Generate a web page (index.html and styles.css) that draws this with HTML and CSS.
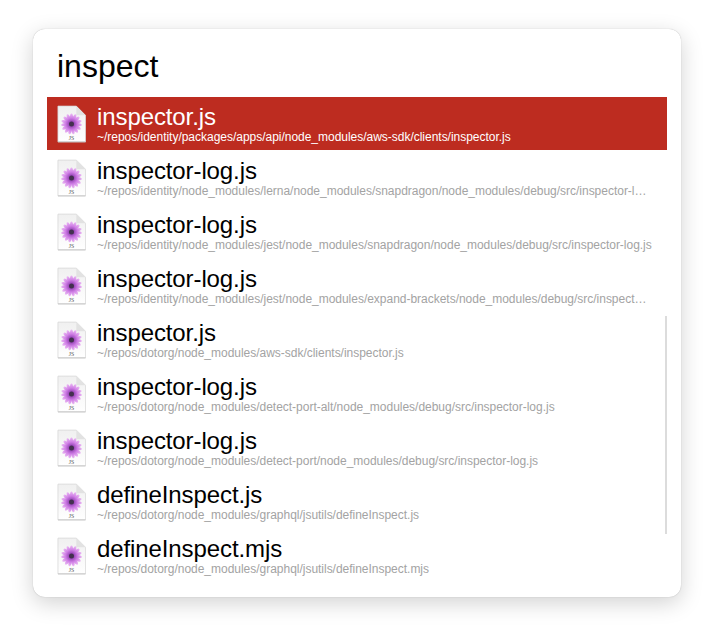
FILE: index.html
```html
<!DOCTYPE html>
<html lang="en">
<head>
    <meta charset="UTF-8">
    <meta name="viewport" content="width=device-width, initial-scale=1.0">
    <title>Open Quickly</title>
    <link rel="stylesheet" href="styles.css">
</head>
<body>
    <svg class="defs" width="0" height="0">
        <defs>
            <radialGradient id="petal-fill" gradientUnits="userSpaceOnUse" cx="15" cy="19" r="10.5">
                <stop offset="0.25" stop-color="#9a48ba"/>
                <stop offset="0.6" stop-color="#d07fe6"/>
                <stop offset="1" stop-color="#e8b4f2"/>
            </radialGradient>
            <linearGradient id="page-fill" x1="0" y1="0" x2="0" y2="1">
                <stop offset="0" stop-color="#f0f0f0"/>
                <stop offset="1" stop-color="#ffffff"/>
            </linearGradient>
            <ellipse id="petal" cx="15" cy="13.3" rx="1.7" ry="5.2" fill="url(#petal-fill)"/>
            <symbol id="js-file" viewBox="0 0 30 38">
                <path d="M1 .5H20L29.5 10V37.5H1Z" fill="url(#page-fill)" stroke="#d8d8d8" stroke-width=".8"/>
                <path d="M1 37.5H29.5" stroke="#bdbdbd" stroke-width=".8"/>
                <path d="M20 .5V10H29.5Z" fill="#e2e2e2"/>
                <use href="#petal"/>
                <use href="#petal" transform="rotate(24 15 19)"/>
                <use href="#petal" transform="rotate(48 15 19)"/>
                <use href="#petal" transform="rotate(72 15 19)"/>
                <use href="#petal" transform="rotate(96 15 19)"/>
                <use href="#petal" transform="rotate(120 15 19)"/>
                <use href="#petal" transform="rotate(144 15 19)"/>
                <use href="#petal" transform="rotate(168 15 19)"/>
                <use href="#petal" transform="rotate(192 15 19)"/>
                <use href="#petal" transform="rotate(216 15 19)"/>
                <use href="#petal" transform="rotate(240 15 19)"/>
                <use href="#petal" transform="rotate(264 15 19)"/>
                <use href="#petal" transform="rotate(288 15 19)"/>
                <use href="#petal" transform="rotate(312 15 19)"/>
                <use href="#petal" transform="rotate(336 15 19)"/>
                <circle cx="15" cy="19" r="2.6" fill="#43304f"/>
                <text x="15" y="35.5" class="icon-label">JS</text>
            </symbol>
        </defs>
    </svg>

    <div class="panel">
        <div class="search">inspect</div>
        <div class="scrollbar"></div>
        <ul class="results">
            <li class="result selected">
                <svg class="file-icon"><use href="#js-file"/></svg>
                <div class="result-text">
                    <div class="name">inspector.js</div>
                    <div class="path">~/repos/identity/packages/apps/api/node_modules/aws-sdk/clients/inspector.js</div>
                </div>
            </li>
            <li class="result">
                <svg class="file-icon"><use href="#js-file"/></svg>
                <div class="result-text">
                    <div class="name">inspector-log.js</div>
                    <div class="path">~/repos/identity/node_modules/lerna/node_modules/snapdragon/node_modules/debug/src/inspector-log.js</div>
                </div>
            </li>
            <li class="result">
                <svg class="file-icon"><use href="#js-file"/></svg>
                <div class="result-text">
                    <div class="name">inspector-log.js</div>
                    <div class="path">~/repos/identity/node_modules/jest/node_modules/snapdragon/node_modules/debug/src/inspector-log.js</div>
                </div>
            </li>
            <li class="result">
                <svg class="file-icon"><use href="#js-file"/></svg>
                <div class="result-text">
                    <div class="name">inspector-log.js</div>
                    <div class="path">~/repos/identity/node_modules/jest/node_modules/expand-brackets/node_modules/debug/src/inspector-log.js</div>
                </div>
            </li>
            <li class="result">
                <svg class="file-icon"><use href="#js-file"/></svg>
                <div class="result-text">
                    <div class="name">inspector.js</div>
                    <div class="path">~/repos/dotorg/node_modules/aws-sdk/clients/inspector.js</div>
                </div>
            </li>
            <li class="result">
                <svg class="file-icon"><use href="#js-file"/></svg>
                <div class="result-text">
                    <div class="name">inspector-log.js</div>
                    <div class="path">~/repos/dotorg/node_modules/detect-port-alt/node_modules/debug/src/inspector-log.js</div>
                </div>
            </li>
            <li class="result">
                <svg class="file-icon"><use href="#js-file"/></svg>
                <div class="result-text">
                    <div class="name">inspector-log.js</div>
                    <div class="path">~/repos/dotorg/node_modules/detect-port/node_modules/debug/src/inspector-log.js</div>
                </div>
            </li>
            <li class="result">
                <svg class="file-icon"><use href="#js-file"/></svg>
                <div class="result-text">
                    <div class="name">defineInspect.js</div>
                    <div class="path">~/repos/dotorg/node_modules/graphql/jsutils/defineInspect.js</div>
                </div>
            </li>
            <li class="result">
                <svg class="file-icon"><use href="#js-file"/></svg>
                <div class="result-text">
                    <div class="name">defineInspect.mjs</div>
                    <div class="path">~/repos/dotorg/node_modules/graphql/jsutils/defineInspect.mjs</div>
                </div>
            </li>
        </ul>
    </div>
</body>
</html>
```

FILE: styles.css
```css
body {
    margin: 0;
    padding: 29px 33px 37px;
    font-family: "Liberation Sans", Arial, sans-serif;
    background: #fff;
    color: #000;
}

.defs { position: absolute; }

.icon-label {
    font-family: "Liberation Serif", serif;
    font-size: 6px;
    fill: #555;
    text-anchor: middle;
}

.panel {
    position: relative;
    box-sizing: border-box;
    width: 648px;
    height: 568px;
    padding: 0 14px;
    background: #fff;
    border-radius: 12px;
    box-shadow: 0 0 1px rgba(0, 0, 0, 0.3), 0 6px 22px rgba(0, 0, 0, 0.18);
}

.search {
    height: 68px;
    padding-left: 10px;
    font-size: 32px;
    line-height: 75px;
}

.scrollbar {
    position: absolute;
    top: 287px;
    right: 14px;
    width: 2px;
    height: 218px;
    background: #dcdcdc;
}

.results {
    margin: 0;
    padding: 0;
    list-style: none;
}

.result {
    display: flex;
    align-items: center;
    gap: 11px;
    height: 54px;
    padding-left: 10px;
    padding-right: 15px;
}

.result.selected {
    height: 53px;
    margin-bottom: 1px;
    background: #bd2c20;
    color: #fff;
}

.file-icon {
    flex: none;
    width: 29px;
    height: 38px;
}

.result-text { min-width: 0; flex: 1; }

.name {
    font-size: 24px;
    line-height: 26px;
    letter-spacing: -0.1px;
}

.path {
    font-size: 12px;
    line-height: 14px;
    letter-spacing: -0.02px;
    color: #a3a3a3;
    white-space: nowrap;
    overflow: hidden;
    text-overflow: ellipsis;
}

.selected .path { color: #fff; }
```
